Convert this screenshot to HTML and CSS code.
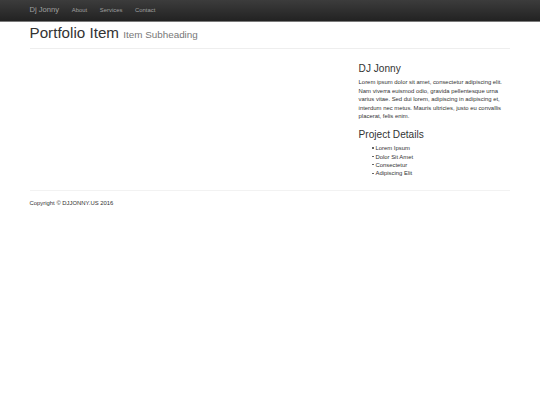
FILE: index.html
```html
<!DOCTYPE html>
<html lang="en">
<head>
<meta charset="utf-8">
<title>Dj Jonny - Portfolio Item</title>
<link rel="stylesheet" href="styles.css">
</head>
<body>
<nav class="navbar">
  <div class="container nav-inner">
    <a class="brand" href="#">Dj Jonny</a>
    <ul class="nav-links">
      <li><a href="#">About</a></li>
      <li><a href="#">Services</a></li>
      <li><a href="#">Contact</a></li>
    </ul>
  </div>
</nav>
<main class="container">
  <h1 class="page-header">Portfolio Item <small>Item Subheading</small></h1>
  <div class="row">
    <div class="col-main"></div>
    <div class="col-side">
      <h3>DJ Jonny</h3>
      <p>Lorem ipsum dolor sit amet, consectetur adipiscing elit. Nam viverra euismod odio, gravida pellentesque urna varius vitae. Sed dui lorem, adipiscing in adipiscing et, interdum nec metus. Mauris ultricies, justo eu convallis placerat, felis enim.</p>
      <h3>Project Details</h3>
      <ul class="details">
        <li>Lorem Ipsum</li>
        <li>Dolor Sit Amet</li>
        <li>Consectetur</li>
        <li>Adipiscing Elit</li>
      </ul>
    </div>
  </div>
  <hr class="divider">
  <footer class="footer">
    <p>Copyright &copy; DJJONNY.US 2016</p>
  </footer>
</main>
</body>
</html>
```
FILE: styles.css
```css
body {
  margin: 0;
  font-family: "Liberation Sans", Arial, Helvetica, sans-serif;
  font-size: 5.906px;
  line-height: 8.4375px;
  color: #333;
  background: #fff;
}
a {
  text-decoration: none;
}
.container {
  width: 493.6px;
  margin: 0 auto;
  padding: 0 6.33px;
  box-sizing: border-box;
}
.navbar {
  height: 22px;
  background: linear-gradient(to bottom, #3c3c3c 0, #222 100%);
  border-bottom: 1px solid #7a7a7a;
  box-sizing: border-box;
}
.nav-inner {
  display: flex;
  align-items: stretch;
  height: 100%;
}
.brand {
  margin-left: -6.33px;
  padding: 6.33px;
  font-size: 7.6px;
  line-height: 8.44px;
  color: #a3a3a3;
  text-shadow: 0 -0.4px 0 rgba(0, 0, 0, 0.25);
}
.nav-links {
  display: flex;
  list-style: none;
  margin: 0;
  padding: 0;
}
.nav-links a {
  display: block;
  padding: 6.33px;
  line-height: 8.44px;
  color: #a3a3a3;
  text-shadow: 0 -0.4px 0 rgba(0, 0, 0, 0.25);
}
.page-header {
  margin: 3.3px 0 6.2px;
  padding-bottom: 3.6px;
  border-bottom: 1px solid #eee;
  font-size: 15.19px;
  font-weight: 400;
  line-height: 16.7px;
  color: #333;
}
.page-header small {
  font-size: 65%;
  font-weight: 400;
  color: #777;
}
.row {
  display: flex;
  margin: 0 -6.33px;
}
.col-main {
  width: 66.6667%;
  padding: 0 6.33px;
  box-sizing: border-box;
}
.col-side {
  width: 33.3333%;
  padding: 0 6.33px;
  box-sizing: border-box;
}
.col-side h3 {
  margin: 8.44px 0 4px;
  font-size: 10.125px;
  font-weight: 400;
  line-height: 11.14px;
}
.col-side p {
  margin: 0 0 4.22px;
}
.details {
  margin: 0 0 4.22px;
  padding-left: 16.9px;
  list-style: none;
}
.details li::before {
  content: "";
  display: inline-block;
  width: 1.7px;
  height: 1.2px;
  margin: 0 1.8px 1.3px -3.5px;
  background: #666;
  vertical-align: middle;
}
.divider {
  margin: 8px 0;
  border: 0;
  border-top: 1px solid #f2f2f2;
}
.footer p {
  margin: 0 0 4.22px;
}
```
